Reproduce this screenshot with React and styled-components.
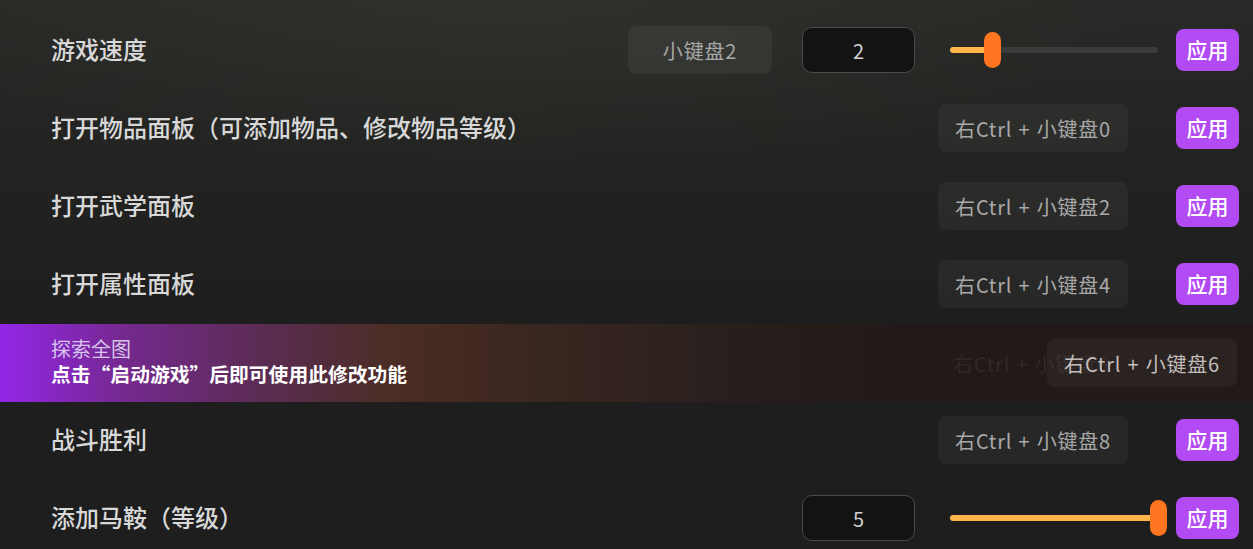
import React from 'react'
import styled, { createGlobalStyle } from 'styled-components'

const Global = createGlobalStyle`
  html, body {
    margin: 0;
    padding: 0;
    background: #1e1e1e;
  }
  body {
    font-family: "Noto Sans CJK SC", "Noto Sans", sans-serif;
    overflow: hidden;
  }
`

const Page = styled.div`
  position: relative;
  width: 1253px;
  height: 549px;
  overflow: hidden;
  padding-top: 11px;
  box-sizing: border-box;
  background:
    radial-gradient(ellipse 900px 260px at 40% 0%, rgba(60, 62, 55, 0.35), rgba(0, 0, 0, 0) 70%),
    linear-gradient(180deg, #292a27 0%, #222321 30%, #1e1e1e 58%, #1e1e1e 100%);
`

const Row = styled.div`
  display: flex;
  align-items: center;
  height: 78px;
  padding: 0 14px 0 51px;
  box-sizing: border-box;
`

const Label = styled.div`
  flex: 1;
  font-size: 24px;
  font-weight: 500;
  color: #d8d8d8;
  white-space: nowrap;
  padding-bottom: 3px;
`

const KeyTag = styled.div`
  height: 48px;
  display: flex;
  align-items: center;
  padding: 0 17px;
  border-radius: 8px;
  background: rgba(255, 255, 255, ${p => (p.$light ? 0.055 : 0.045)});
  color: ${p => p.$color || '#a8a8a8'};
  font-size: 20px;
  letter-spacing: 0.8px;
  word-spacing: 1px;
  white-space: nowrap;
  box-sizing: border-box;
  margin-right: ${p => p.$gap || 0}px;
  ${p => p.$w ? `width: ${p.$w}px; justify-content: center;` : ''}
`

const NumBox = styled.div`
  width: 113px;
  height: 46px;
  box-sizing: border-box;
  border: 1.5px solid #4a4a4a;
  border-radius: 10px;
  background: #131313;
  color: #d2d2d2;
  font-size: 20px;
  display: flex;
  align-items: center;
  justify-content: center;
  margin-right: 35px;
`

const Track = styled.div`
  position: relative;
  width: 208px;
  height: 6px;
  border-radius: 3px;
  background: #3a3b38;
  margin-right: 18px;
`

const Fill = styled.div`
  height: 100%;
  border-radius: 3px;
  background: #ffb54a;
`

const Thumb = styled.div`
  position: absolute;
  top: -15px;
  width: 17px;
  height: 36px;
  margin-left: -8px;
  border-radius: 9px;
  background: #ff7520;
`

const ApplyBtn = styled.button`
  width: 63px;
  height: 42px;
  border: none;
  border-radius: 8px;
  background: #b24bf4;
  color: #fff;
  font-family: inherit;
  font-size: 21px;
  font-weight: 500;
  padding: 0 0 2px;
  cursor: pointer;
`

const Toast = styled.div`
  position: absolute;
  left: 0;
  right: 0;
  top: 324px;
  height: 78px;
  display: flex;
  align-items: center;
  padding: 0 16px 0 51px;
  box-sizing: border-box;
  background: linear-gradient(90deg, #9326e8 0%, #74298e 10%, #5d2c58 20%, #4b2d24 31%, #3a2620 43%, #29201d 57%, #221a18 72%, #211a18 100%);
`

const ToastText = styled.div`
  flex: 1;
  display: flex;
  flex-direction: column;
  line-height: 25px;
  padding-bottom: 4px;
`

const ToastTitle = styled.div`
  font-size: 20px;
  color: #d7c4ea;
`

const ToastMsg = styled.div`
  font-size: 19.8px;
  font-weight: 700;
  color: #ffffff;
  white-space: nowrap;
`

const Ghost = styled.div`
  position: absolute;
  left: 953px;
  top: 25px;
  font-size: 20px;
  letter-spacing: 0.8px;
  word-spacing: 1px;
  color: rgba(255, 255, 255, 0.08);
  white-space: nowrap;
`

const Slider = ({ pct }) => (
  <Track>
    <Fill style={{ width: `${pct}%` }} />
    <Thumb style={{ left: `${pct}%` }} />
  </Track>
)

const hotkeys = [
  { label: '打开物品面板（可添加物品、修改物品等级）', key: '右Ctrl + 小键盘0' },
  { label: '打开武学面板', key: '右Ctrl + 小键盘2' },
  { label: '打开属性面板', key: '右Ctrl + 小键盘4' },
  { label: '探索全图', key: '右Ctrl + 小键盘6' },
  { label: '战斗胜利', key: '右Ctrl + 小键盘8' },
]

export default function App() {
  return (
    <Page>
      <Global />
      <Row>
        <Label>游戏速度</Label>
        <KeyTag $light $w={144} $gap={30}>小键盘2</KeyTag>
        <NumBox>2</NumBox>
        <Slider pct={20} />
        <ApplyBtn>应用</ApplyBtn>
      </Row>
      {hotkeys.map(h => (
        <Row key={h.label}>
          <Label>{h.label}</Label>
          <KeyTag $gap={48}>{h.key}</KeyTag>
          <ApplyBtn>应用</ApplyBtn>
        </Row>
      ))}
      <Row>
        <Label>添加马鞍（等级）</Label>
        <NumBox>5</NumBox>
        <Slider pct={100} />
        <ApplyBtn>应用</ApplyBtn>
      </Row>

      <Toast>
        <ToastText>
          <ToastTitle>探索全图</ToastTitle>
          <ToastMsg>点击“启动游戏”后即可使用此修改功能</ToastMsg>
        </ToastText>
        <Ghost>右Ctrl + 小键盘6</Ghost>
        <KeyTag $color="#c2bdbb">右Ctrl + 小键盘6</KeyTag>
      </Toast>
    </Page>
  )
}
